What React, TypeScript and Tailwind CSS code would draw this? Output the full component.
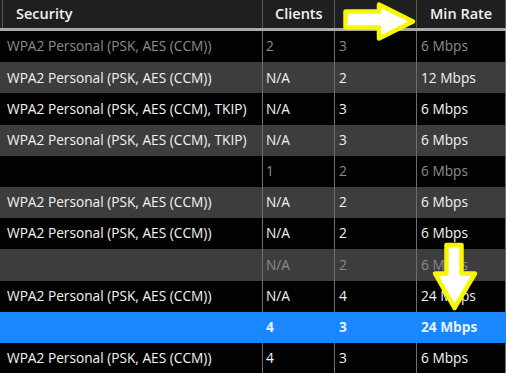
import React from 'react';

type Row = {
  security: string;
  clients: string;
  streams: string;
  rate: string;
  tone: 'dim' | 'normal' | 'selected';
};

const rows: Row[] = [
  { security: 'WPA2 Personal (PSK, AES (CCM))', clients: '2', streams: '3', rate: '6 Mbps', tone: 'dim' },
  { security: 'WPA2 Personal (PSK, AES (CCM))', clients: 'N/A', streams: '2', rate: '12 Mbps', tone: 'normal' },
  { security: 'WPA2 Personal (PSK, AES (CCM), TKIP)', clients: 'N/A', streams: '3', rate: '6 Mbps', tone: 'normal' },
  { security: 'WPA2 Personal (PSK, AES (CCM), TKIP)', clients: 'N/A', streams: '3', rate: '6 Mbps', tone: 'normal' },
  { security: '', clients: '1', streams: '2', rate: '6 Mbps', tone: 'dim' },
  { security: 'WPA2 Personal (PSK, AES (CCM))', clients: 'N/A', streams: '2', rate: '6 Mbps', tone: 'normal' },
  { security: 'WPA2 Personal (PSK, AES (CCM))', clients: 'N/A', streams: '2', rate: '6 Mbps', tone: 'normal' },
  { security: '', clients: 'N/A', streams: '2', rate: '6 Mbps', tone: 'dim' },
  { security: 'WPA2 Personal (PSK, AES (CCM))', clients: 'N/A', streams: '4', rate: '24 Mbps', tone: 'normal' },
  { security: '', clients: '4', streams: '3', rate: '24 Mbps', tone: 'selected' },
  { security: 'WPA2 Personal (PSK, AES (CCM))', clients: '4', streams: '3', rate: '6 Mbps', tone: 'normal' },
];

const cols = 'grid grid-cols-[262px_72px_82px_90px]';

export default function App() {
  return (
    <div
      className="relative w-[506px] h-[373px] overflow-hidden bg-black text-[13.7px]"
      style={{ fontFamily: '"Open Sans", "Noto Sans", sans-serif' }}
    >
      {/* Header */}
      <div className={`${cols} h-[28px] bg-[#1f1f1f] text-[#f2f2f2] font-semibold text-[14.5px]`}>
        <div className="ml-[2px] border-l border-[#5a5a5a] flex items-center pl-[13px]">Security</div>
        <div className="border-l border-[#5a5a5a] flex items-center pl-[12px]">Clients</div>
        <div className="border-l border-[#5a5a5a]"></div>
        <div className="border-l border-r border-[#5a5a5a] flex items-center pl-[13px]">Min Rate</div>
      </div>
      <div className="h-[3px] bg-[#a9a9a9]" />

      {/* Rows */}
      {rows.map((r, i) => {
        const bg =
          r.tone === 'selected' ? 'bg-[#1a86ff]' : i % 2 === 1 ? 'bg-[#3d3d3d]' : 'bg-[#020202]';
        const text =
          r.tone === 'selected'
            ? 'text-[#e4f1ff] font-bold'
            : r.tone === 'dim'
            ? 'text-[#8c8c8c]'
            : 'text-[#f4f4f4]';
        const line = r.tone === 'selected' ? 'border-transparent' : 'border-[#6e6e6e]';
        return (
          <div key={i} className={`${cols} h-[31.2px] ${bg} ${text}`}>
            <div className="flex items-center pl-[7px] whitespace-nowrap">{r.security}</div>
            <div className={`border-l ${line} flex items-center pl-[3px]`}>{r.clients}</div>
            <div className={`border-l ${line} flex items-center pl-[4px]`}>{r.streams}</div>
            <div className={`border-l border-r ${line} flex items-center pl-[4px]`}>{r.rate}</div>
          </div>
        );
      })}

      {/* Annotation arrows */}
      <svg className="absolute inset-0 pointer-events-none" width="506" height="373" viewBox="0 0 506 373">
        <polygon
          points="345.5,11.5 379,11.5 379,4.5 413,21.5 379,38.5 379,27.5 345.5,27.5"
          fill="#ffffff"
          stroke="#f7f700"
          strokeWidth="4.5"
          strokeLinejoin="round"
        />
        <polygon
          points="446.5,245 461.5,245 461.5,273.5 475,273.5 454.5,308 435,273.5 446.5,273.5"
          fill="#ffffff"
          stroke="#f7f700"
          strokeWidth="4.5"
          strokeLinejoin="round"
        />
      </svg>
    </div>
  );
}
